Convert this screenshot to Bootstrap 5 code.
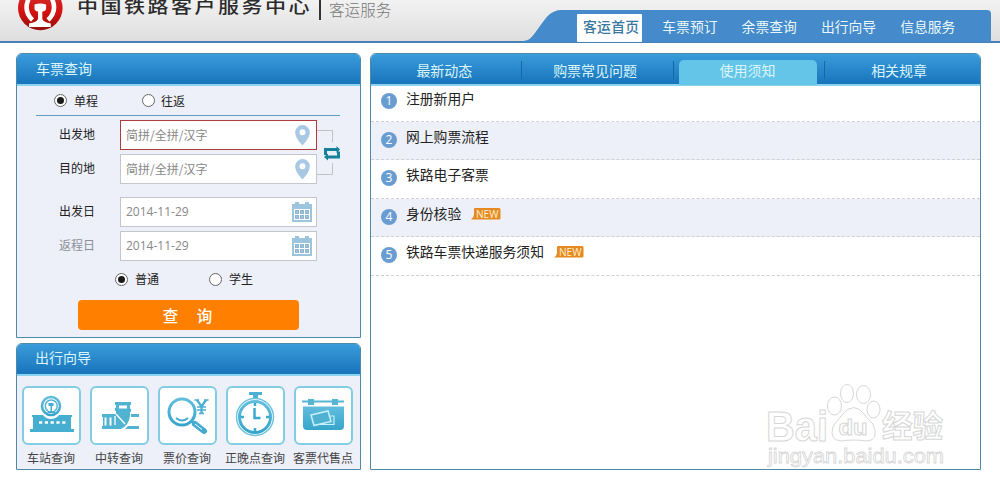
<!DOCTYPE html>
<html lang="zh-CN">
<head>
<meta charset="utf-8">
<meta name="viewport" content="width=device-width, initial-scale=1">
<title>中国铁路客户服务中心</title>
<link rel="stylesheet" href="https://cdn.jsdelivr.net/npm/bootstrap@5.3.0/dist/css/bootstrap.min.css">
<style>
body{font-family:"Noto Sans CJK SC",sans-serif;font-size:12px;line-height:18px;color:#222;background:#fff;width:1000px;height:491px;overflow:hidden}
svg{display:block;flex:none}
.site-head{height:43px;background:linear-gradient(#f2f2f2,#dedede 41px);border-bottom:2px solid #4680b4}
.brand-logo{margin-left:18px;align-self:flex-start}
.brand-name{font-family:"Noto Sans CJK SC",serif;font-size:21px;line-height:24px;letter-spacing:2.5px;font-weight:500;color:#2c2c2c;margin:-6px 0 0 14px;width:235px;white-space:nowrap;transform:scaleY(.82)}
.brand-sep{width:2px;height:20px;background:#333;margin-left:7px}
.brand-sub{font-size:15.6px;line-height:18px;color:#777;margin-left:8px;font-weight:300}
.top-nav{margin-right:9px;margin-top:10px;height:32px;align-items:stretch}
.nav-body{width:425px;background:#458aca;border-radius:0 4px 0 0;padding:4px 0 0 11px}
.nav-body a{width:79.3px;color:#e9f8fb;font-size:13.8px;line-height:25px;text-decoration:none;padding-left:6px;white-space:nowrap;height:28px}
.nav-body a.on{width:65px;background:#fff;color:#3a77a0;font-weight:500;margin-right:14.3px;border-radius:1px;padding-left:6px;letter-spacing:.3px}
.main-area{padding:10px 0 0 16px;gap:9px}
.side{width:345px;gap:5px}
.pane{border:1px solid #4c8aa8;border-radius:6px 6px 0 0;background:#edf0f9;overflow:hidden}
.pane-head{background:linear-gradient(#3a9cdb,#1874bb);border-bottom:2px solid #8bd3ee;box-sizing:content-box;height:30px;color:#d9f5fb;font-size:14px;line-height:28px;padding-left:19px}
.search{height:285px}
.guide{height:127px}
.guide .pane-head{line-height:27px;padding-left:18px}
.rad{width:13px;height:13px;border:1px solid #666;border-radius:50%;background:#fff;flex:none;display:grid;place-items:center}
.rad.on::after{content:"";width:7px;height:7px;border-radius:50%;background:#1b1b1b}
.trip{margin:0 20px 4px 19px;height:30px;border-bottom:1px solid #5aa0c4;padding-left:18px}
.trip span,.kind span{width:24px;white-space:nowrap}
.line{height:30px;padding-left:42px;line-height:28px}
.line+.line{margin-top:4px}
.line label{width:61px;height:28px}
.box{width:197px;height:30px;background:#fff;border:1px solid #c3c6cb;padding:0 4px 0 5px;color:#888}
.box.bad{border-color:#b03a3e}
.date{font-family:"Open Sans",sans-serif;font-size:12px}
.go{width:221px;height:30px;background:#ff8000;color:#fff;border:0;border-radius:4px;font-size:15.5px;line-height:28px;font-weight:500;padding:0 2px 0 0;margin:12px 0 0 61px;word-spacing:15px}
.tiles{padding:10px 0 0 5px;gap:9px}
.tile{width:59px;font-size:12px;color:#444;text-align:center;white-space:nowrap}
.tile-ico{width:59px;height:59px;border:2px solid #82cde3;border-radius:6px;background:#fff;margin-bottom:4px}
.tile span{display:flex;justify-content:center;margin-left:-1px}
.news{width:611px;height:417px;background:#fff}
.news .pane-head{padding:0;line-height:33px}
.tab{width:152px;text-align:center;position:relative}
.tab.t1{width:151px;padding-right:4px}
.tab.t2{padding-right:5px}
.tab.t4{width:155px;padding-right:7px}
.tab+.tab::before{content:"";position:absolute;left:-1px;top:7px;width:1px;height:18px;background:#1767a5}
.tab b{display:block;font-weight:400;width:138px;height:25px;margin:6px 0 0 5px;background:#65c5e8;border-radius:5px 5px 0 0;line-height:21px}
.item{height:38.4px;border-bottom:1px dashed #cfd0d3;padding-left:10px;font-size:13.8px;line-height:20px;color:#222}
.item:nth-child(odd){background:#edf0f8}
.item.first{height:36px}
.item.first .num{margin-top:7px}.item.first .txt{margin-top:2px}
.num{width:16px;height:16px;border-radius:50%;background:#699dd2;color:#fff;font:12px/16px "Open Sans",sans-serif;text-align:center;margin-top:10px;margin-right:9px}
.txt{margin-top:4px}
.new-tag{margin:9px 0 0 10px}
.mark-logo{position:absolute;left:760px;top:378px}
</style>
<script src="https://cdn.jsdelivr.net/npm/bootstrap@5.3.0/dist/js/bootstrap.bundle.min.js"></script>
</head>
<body>
<svg width="0" height="0" class="position-absolute">
<defs>
<linearGradient id="red" x2="0" y2="1"><stop stop-color="#d33a35"/><stop offset=".6" stop-color="#d3120f"/><stop offset="1" stop-color="#93100d"/></linearGradient>
<linearGradient id="blu" x2="0" y2="1"><stop stop-color="#62bddd"/><stop offset="1" stop-color="#36a5cb"/></linearGradient>
<symbol id="pin" viewBox="0 0 15 21"><path fill="#a9c8e3" fill-rule="evenodd" d="M7.500 0A7.300 7.300 0 0 0 .2 7.300C.2 12 4 17 7.500 20.500 11 17 14.800 12 14.800 7.300A7.300 7.300 0 0 0 7.500 0zM7.500 4.300a3 3 0 1 1 0 6 3 3 0 0 1 0-6z"/></symbol>
<symbol id="cal" viewBox="0 0 20 20"><path fill="#9cc4dd" d="M0 2h3V0h4v2h6V0h4v2h3v18H0z"/><path fill="#fff" d="M2 7h16v11H2z"/><path fill="#8db7d1" d="M3 8h4v4H3zm5 0h4v4H8zm5 0h4v4h-4zM3 13h4v4H3zm5 0h4v4H8zm5 0h4v4h-4z"/><path fill="#d8e8f2" d="M4.500 9.500h1v1h-1zm5 0h1v1h-1zm5 0h1v1h-1zm-10 5h1v1h-1zm5 0h1v1h-1zm5 0h1v1h-1z"/></symbol>
<symbol id="new" viewBox="0 0 30 12"><path fill="#e58a20" d="M4 0h24q1.500 0 1.500 1.500v8.500q0 1.500-1.500 1.500H0q3-2 3-5V1q0-1 1-1z"/><text x="5" y="9.500" font-family="Open Sans,sans-serif" font-size="10.500" fill="#fff0d4" textLength="22.500" lengthAdjust="spacingAndGlyphs">NEW</text></symbol>
</defs>
</svg>
<header class="site-head d-flex align-items-start">
  <svg class="brand-logo" width="45" height="31" viewBox="0 0 45 31"><circle cx="22.300" cy="8" r="22.300" fill="url(#red)"/><path d="M12-4Q4 10 14.500 20M32.600-4Q40.600 10 30 20" fill="none" stroke="#fff" stroke-width="4.500"/><path fill="#fff" d="M16.500 4.500q5.800-2 11.600 0v4q0 2.500-3.800 3v7.500q1 3 8.500 4.500V27H11v-3.500q8-1.500 9-4.500v-7.500q-3.500-.5-3.500-3z"/></svg>
  <div class="brand-name">中国铁路客户服务中心</div>
  <div class="brand-sep"></div>
  <div class="brand-sub">客运服务</div>
  <nav class="top-nav d-flex ms-auto">
    <svg width="44" height="32" viewBox="0 0 44 32"><path fill="#458aca" d="M44.500 0H40C28 0 24 8 18 16 10 27 8 31 0 31v1h44.500z"/></svg>
    <div class="nav-body d-flex"><a href="#" class="on">客运首页</a><a href="#">车票预订</a><a href="#">余票查询</a><a href="#">出行向导</a><a href="#">信息服务</a></div>
  </nav>
</header>
<main class="main-area d-flex align-items-start">
  <aside class="side d-flex flex-column">
    <section class="pane search">
      <div class="pane-head">车票查询</div>
      <div class="trip d-flex align-items-center"><i class="rad on"></i><span style="margin-left:7px">单程</span><i class="rad" style="margin-left:44px"></i><span style="margin-left:6px">往返</span></div>
      <div class="d-flex">
        <div>
          <div class="line d-flex"><label>出发地</label><div class="box bad d-flex justify-content-between align-items-center"><span>简拼/全拼/汉字</span><svg style="margin-right:2px" width="15" height="21"><use href="#pin"/></svg></div></div>
          <div class="line d-flex"><label>目的地</label><div class="box d-flex justify-content-between align-items-center"><span>简拼/全拼/汉字</span><svg style="margin-right:2px" width="15" height="21"><use href="#pin"/></svg></div></div>
        </div>
        <svg width="26" height="64" viewBox="0 0 26 64"><path fill="none" stroke="#bfc3c8" d="M0 10.500h15.500v12M0 54.500h15.500V43"/><path fill="#15829c" d="M7 28h12.500v-2l3.500 3.500-3.500 3.500v-2H10v4H7zM23 38.500H11v2L7 37l4-3.500v2h9v-4h3z"/></svg>
      </div>
      <div style="margin-top:13px">
        <div class="line d-flex"><label>出发日</label><div class="box d-flex justify-content-between align-items-center"><span class="date">2014-11-29</span><svg width="20" height="20"><use href="#cal"/></svg></div></div>
        <div class="line d-flex"><label style="color:#8b8f96">返程日</label><div class="box d-flex justify-content-between align-items-center"><span class="date">2014-11-29</span><svg width="20" height="20"><use href="#cal"/></svg></div></div>
      </div>
      <div class="kind d-flex align-items-center" style="margin:9px 0 0 98px"><i class="rad on"></i><span style="margin-left:7px">普通</span><i class="rad" style="margin-left:50px"></i><span style="margin-left:7px">学生</span></div>
      <button class="go d-block">查 询</button>
    </section>
    <section class="pane guide">
      <div class="pane-head">出行向导</div>
      <div class="tiles d-flex">
        <div class="tile"><div class="tile-ico"><svg width="55" height="55" viewBox="0 0 55 55"><circle cx="27" cy="18" r="9" fill="#fff" stroke="url(#blu)" stroke-width="2.500"/><path d="M24 23a6 6 0 1 1 6.500 0" fill="none" stroke="#55b5d5" stroke-width="1.500"/><path fill="#46aed1" d="M24.500 15h5v3h-1.500v5h3v2h-7.500v-2h3v-5h-2zM8 27h11q3 4 8 4t8-4h13v2h-1v12h3v3H6v-3h3V29H8z"/><path stroke="#fff" stroke-width="2.600" stroke-dasharray="3.200 2.600" d="M15 34.500h28"/></svg></div><span>车站查询</span></div>
        <div class="tile"><div class="tile-ico"><svg width="55" height="55" viewBox="0 0 55 55"><path fill="#51b3d2" d="M24 14h15v3h-1v4h1v3h-1v4q-1 9-9 13H10v-3h1v-9h-1v-3h14v-3h-1v-3h1v-3h-1v-3zM39 26h8v3h-8zM36 38h11v3H33z"/><path fill="#fff" d="M27 17.500h8v3h-8zM12.500 29.500h2v8h-2zM17.500 29.500h2v8h-2z"/><path stroke="#fff" fill="none" stroke-width="1.300" d="M24 26l9 10M23 28v9"/></svg></div><span>中转查询</span></div>
        <div class="tile"><div class="tile-ico"><svg width="55" height="55" viewBox="0 0 55 55"><circle cx="22" cy="24" r="13" fill="none" stroke="url(#blu)" stroke-width="3"/><path fill="none" stroke="#44abd0" stroke-width="2" d="M16 30q6 5 12 0"/><path d="m31 33 4 3" stroke="#44abd0" stroke-width="3"/><path d="m35 36 9 7" stroke="#44abd0" stroke-width="6" stroke-linecap="round"/><path d="m35 36 7 5.500" stroke="#fff" stroke-width="1"/><path fill="none" stroke="#4aafd2" stroke-width="2.300" d="m37 12 4.500 6.500L46 12M41.500 18v7.500"/><path fill="none" stroke="#4aafd2" stroke-width="1.500" d="M37 19h9M37 22h9M34.500 12h4.500M44 12h4.500M39 25.500h5"/></svg></div><span>票价查询</span></div>
        <div class="tile"><div class="tile-ico"><svg width="55" height="55" viewBox="0 0 55 55"><path fill="#4bb0d1" d="M21 4h13v3h-4v6h-5V7h-4z"/><circle cx="27" cy="29" r="18.500" fill="#fff" stroke="#6cc2dc" stroke-width="1.500"/><circle cx="27" cy="29" r="15.500" fill="#fff" stroke="url(#blu)" stroke-width="3"/><path fill="none" stroke="#3da8cd" stroke-width="2.500" d="M26.500 20v10h6M27 15v3m0 22v3M13 29h3m22 0h3"/></svg></div><span>正晚点查询</span></div>
        <div class="tile"><div class="tile-ico"><svg width="55" height="55" viewBox="0 0 55 55"><path stroke="#55b5d5" stroke-width="2" d="M6 13.500h42"/><path fill="#55b5d5" d="M12 11h6v6h-6zm24 0h6v6h-6z"/><path fill="url(#blu)" d="M7 18.500h41V38q0 4-4 4H11q-4 0-4-4z"/><path fill="#50b2d3" stroke="#c5f1fa" stroke-width="1.200" d="M34 28h4v8.500H24z"/><path fill="#50b2d3" stroke="#c5f1fa" stroke-width="1.500" d="m15 27 17-4 3 10.500-17 4z"/></svg></div><span>客票代售点</span></div>
      </div>
    </section>
  </aside>
  <section class="pane news">
    <div class="pane-head d-flex"><div class="tab t1">最新动态</div><div class="tab t2">购票常见问题</div><div class="tab"><b>使用须知</b></div><div class="tab t4">相关规章</div></div>
    <div class="item first d-flex align-items-start"><i class="num">1</i><span class="txt">注册新用户</span></div>
    <div class="item d-flex align-items-start"><i class="num">2</i><span class="txt">网上购票流程</span></div>
    <div class="item d-flex align-items-start"><i class="num">3</i><span class="txt">铁路电子客票</span></div>
    <div class="item d-flex align-items-start"><i class="num">4</i><span class="txt">身份核验</span><svg class="new-tag" width="30" height="12"><use href="#new"/></svg></div>
    <div class="item d-flex align-items-start"><i class="num">5</i><span class="txt">铁路车票快递服务须知</span><svg class="new-tag" width="30" height="12"><use href="#new"/></svg></div>
  </section>
</main>
<svg class="mark-logo" width="192" height="92" viewBox="0 0 192 92" fill="#fff" stroke="#d6d6d6" stroke-width="1">
  <text x="6" y="62.500" font-family="Liberation Sans,sans-serif" font-weight="700" font-size="42" textLength="62" lengthAdjust="spacingAndGlyphs">Bai</text>
  <ellipse cx="74.500" cy="28" rx="7" ry="9"/><ellipse cx="87" cy="15.500" rx="6.500" ry="9"/><ellipse cx="103.500" cy="16.500" rx="7" ry="9"/><ellipse cx="113.500" cy="31.500" rx="6.500" ry="8.500"/>
  <path d="M82 37q12-15 23 0 3 5 8 9 7 17-7 17-6-1-12-1t-13 1q-12-1-8-14 2-4 9-12z"/>
  <text x="78.500" y="57" font-family="Liberation Sans,sans-serif" font-weight="700" font-size="22" textLength="29" lengthAdjust="spacingAndGlyphs">du</text>
  <text x="122" y="59" font-family="Noto Sans CJK SC,sans-serif" font-weight="700" font-size="30.500">经验</text>
  <text x="8" y="85" font-family="Liberation Sans,sans-serif" font-size="20" stroke-width=".8" textLength="176" lengthAdjust="spacingAndGlyphs">jingyan.baidu.com</text>
</svg>
</body>
</html>
